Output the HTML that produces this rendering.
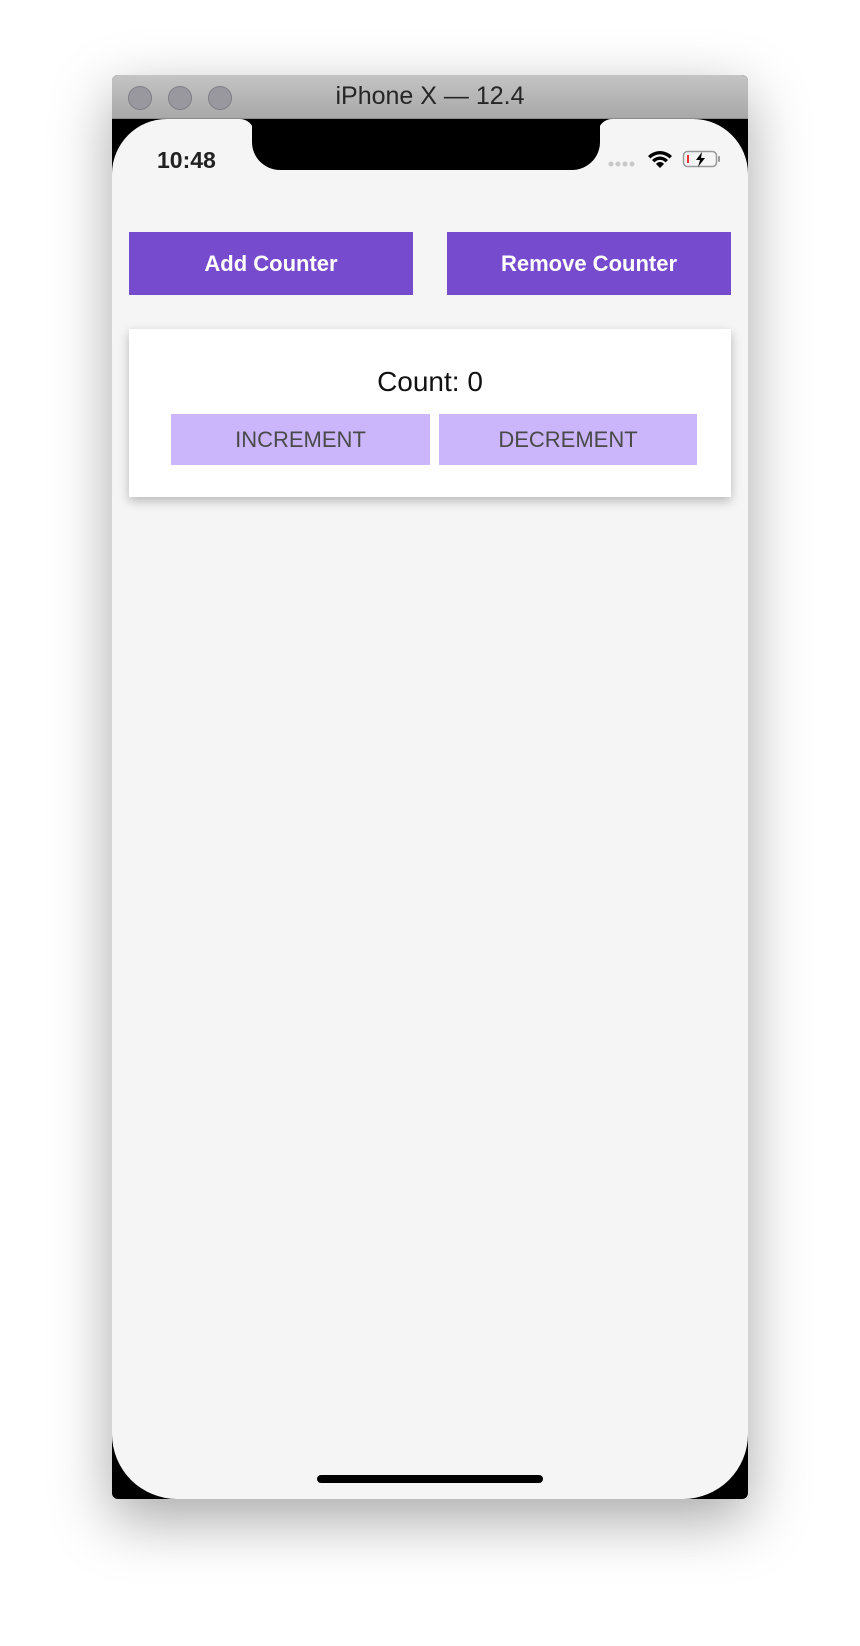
<!DOCTYPE html>
<html><head><style>
*{margin:0;padding:0;box-sizing:border-box}
body{width:860px;height:1646px;background:#fff;position:relative;overflow:hidden;font-family:"Liberation Sans",sans-serif}
.win{position:absolute;left:112px;top:75px;width:636px;height:1424px;border-radius:6px;background:#000;box-shadow:0 20px 60px rgba(0,0,0,.35);overflow:hidden}
.tb{position:absolute;left:0;top:0;width:100%;height:44px;background:linear-gradient(#c4c4c4,#a8a8a8);border-bottom:1px solid #8a8a8a}
.tl{position:absolute;top:11px;width:24px;height:24px;border-radius:50%;background:#9a989f;border:1px solid #7f7d85}
.title{position:absolute;left:0;right:0;top:7px;text-align:center;font-size:25px;color:#262626}
.screen{position:absolute;left:0;top:44px;width:636px;height:1380px;background:#f5f5f5;border-radius:55px 55px 65px 65px}
.notch{position:absolute;left:140px;top:44px;width:348px;height:51px;background:#000;border-radius:0 0 28px 28px}
.btn{position:absolute;top:157px;height:63px;background:#764bcd;color:#fff;font-weight:bold;font-size:22px;text-align:center;line-height:63px}
.card{position:absolute;left:17px;top:254px;width:602px;height:168px;background:#fff;box-shadow:0 4px 10px rgba(0,0,0,.25)}
.sb{position:absolute;top:339px;height:51px;background:#cbb5fb;color:#4a4a4a;font-size:22px;text-align:center;line-height:51px}
</style></head><body>
<div class="win">
<div class="tb"><div class="tl" style="left:16px"></div><div class="tl" style="left:56px"></div><div class="tl" style="left:96px"></div>
<div class="title">iPhone X — 12.4</div></div>
<div class="screen"></div>
<div class="notch"></div>
<svg style="position:absolute;left:128px;top:44px" width="14" height="14"><path d="M0 0H14V14A14 14 0 0 0 0 0z" fill="#000"/></svg>
<svg style="position:absolute;left:486px;top:44px" width="14" height="14"><path d="M14 0H0V14A14 14 0 0 1 14 0z" fill="#000"/></svg>
<div style="position:absolute;left:45px;top:72px;font-size:23px;font-weight:bold;color:#222">10:48</div>
<svg style="position:absolute;left:495px;top:74px" width="120" height="20" viewBox="0 0 120 20">
<g fill="#c8c8c8"><circle cx="4" cy="15" r="2.5"/><circle cx="11" cy="15" r="2.5"/><circle cx="18" cy="15" r="2.5"/><circle cx="25" cy="15" r="2.5"/></g>
<path d="M41 7a17 17 0 0 1 24 0l-2.5 2.5a13 13 0 0 0-19 0z M45 11a11 11 0 0 1 16 0l-2.5 2.5a7 7 0 0 0-11 0z M49 15a5 5 0 0 1 8 0l-4 4z" fill="#000"/>
<rect x="76.5" y="2.5" width="33" height="15" rx="4" fill="none" stroke="#999" stroke-width="1.5"/>
<rect x="80" y="6" width="2" height="8" fill="#e33"/>
<rect x="111" y="7" width="2" height="6" rx="1" fill="#999"/>
<path d="M95 3l-6 8h4l-2 7 7-9h-4z" fill="#000"/>
</svg>
<div class="btn" style="left:17px;width:284px">Add Counter</div>
<div class="btn" style="left:335px;width:284px">Remove Counter</div>
<div class="card"></div>
<div style="position:absolute;left:17px;width:602px;top:291px;text-align:center;font-size:28px;color:#111">Count: 0</div>
<div class="sb" style="left:59px;width:259px">INCREMENT</div>
<div class="sb" style="left:327px;width:258px">DECREMENT</div>
<div style="position:absolute;left:205px;top:1400px;width:226px;height:8px;border-radius:4px;background:#000"></div>
</div>
</body></html>
